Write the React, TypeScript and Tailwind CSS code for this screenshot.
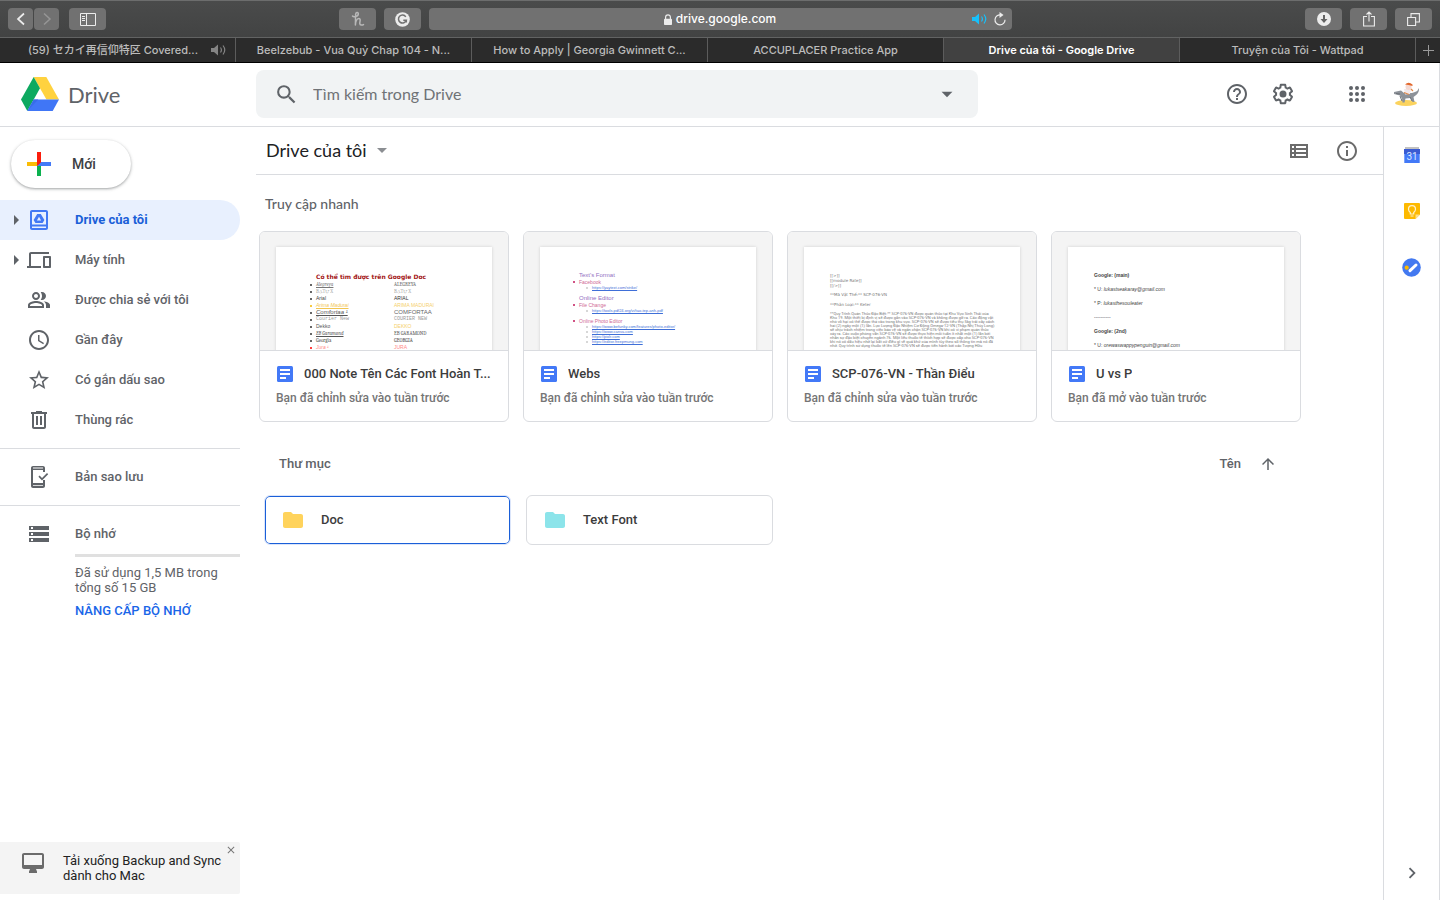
import type { ReactNode } from "react"
import {
  MdAccessTime,
  MdArrowDropDown,
  MdArrowUpward,
  MdChevronRight,
  MdClose,
  MdFolder,
  MdHelpOutline,
  MdInfoOutline,
  MdSearch,
  MdStarBorder,
  MdStorage,
} from "react-icons/md"

const TABS = [
  { title: "(59) セカイ再信仰特区 Covered...", audio: true },
  { title: "Beelzebub - Vua Quỷ Chap 104 - N..." },
  { title: "How to Apply | Georgia Gwinnett C..." },
  { title: "ACCUPLACER Practice App" },
  { title: "Drive của tôi - Google Drive", active: true },
  { title: "Truyện của Tôi - Wattpad" },
]

function Svg({ d, size = 24 }: { d: string; size?: number }) {
  return (
    <svg width={size} height={size} viewBox="0 0 24 24" fill="currentColor" fillRule="evenodd">
      <path d={d} />
    </svg>
  )
}

const DEVICES = "M4 6h18V4H4c-1.1 0-2 .9-2 2v12H0v2h14v-2H4V6zm19 2h-6c-.55 0-1 .45-1 1v10c0 .55.45 1 1 1h6c.55 0 1-.45 1-1V9c0-.55-.45-1-1-1zm-1 10h-4v-8h4v8z"
const PEOPLE = "M16.67 13.13C18.04 14.06 19 15.32 19 17v3h4v-3c0-2.18-3.57-3.47-6.33-3.87zM15 12c2.21 0 4-1.79 4-4s-1.79-4-4-4c-.47 0-.91.1-1.33.24C14.5 5.27 15 6.58 15 8s-.5 2.73-1.33 3.76c.42.14.86.24 1.33.24zM9 12c2.21 0 4-1.79 4-4s-1.79-4-4-4-4 1.79-4 4 1.79 4 4 4zm0-6c1.1 0 2 .9 2 2s-.9 2-2 2-2-.9-2-2 .9-2 2-2zM9 13c-2.67 0-8 1.34-8 4v3h16v-3c0-2.66-5.33-4-8-4zm6 5H3v-.99C3.2 16.29 6.3 15 9 15s5.8 1.29 6 2v1z"
const TRASH = "M9 3h6v1h5v2h-1v13c0 1.1-.9 2-2 2H7c-1.1 0-2-.9-2-2V6H4V4h5zM7 6v13h10V6zM9 8h2v9H9zM13 8h2v9h-2z"
const MY_DRIVE = "M5 2h14c1.1 0 2 .9 2 2v16c0 1.1-.9 2-2 2H5c-1.1 0-2-.9-2-2V4c0-1.1.9-2 2-2zM5 4v12.500h14V4zM5 18.500V20h14v-1.500zM10.200 6h3.600l3.600 6-1.800 3H8.400l-1.800-3zM12 8.800L9.900 12.400h4.200z"
const BACKUP = "M6 1h10c1.100 0 2 .9 2 2v4h-2V5H6v13h10v-3h2v6c0 1.100-.9 2-2 2H6c-1.100 0-2-.9-2-2V3c0-1.100.9-2 2-2zM6 2.600v.9h10v-.9zM6 20.200v.9h10v-.9zM20 8l1.200 1.200-6.200 6.200-3.600-3.600 1.200-1.200L15 13z"
const MONITOR = "M3 2h18c1.100 0 2 .9 2 2v12c0 1.100-.9 2-2 2h-6l1 2.500V22H8v-1.500L9 18H3c-1.100 0-2-.9-2-2V4c0-1.100.9-2 2-2zM3 4v10h18V4z"
const VIEW_LIST = "M3 5h18v14H3zM5 7v2h2V7zM9 7v2h10V7zM5 11v2h2v-2zM9 11v2h10v-2zM5 15v2h2v-2zM9 15v2h10v-2z"
const GEAR = "M13.85 22.25h-3.7c-.74 0-1.36-.54-1.45-1.27l-.27-1.89c-.27-.14-.53-.29-.79-.46l-1.8.72c-.7.26-1.47-.03-1.81-.65L2.2 15.53c-.35-.66-.2-1.44.36-1.88l1.53-1.19c-.01-.15-.02-.3-.02-.46 0-.15.01-.31.02-.46l-1.52-1.19c-.59-.45-.74-1.26-.37-1.88l1.85-3.19c.34-.62 1.11-.9 1.79-.63l1.81.73c.26-.17.52-.32.78-.46l.27-1.91c.09-.7.71-1.25 1.44-1.25h3.7c.74 0 1.36.54 1.45 1.27l.27 1.89c.27.14.53.29.79.46l1.8-.72c.71-.26 1.48.03 1.82.65l1.84 3.18c.36.66.2 1.44-.36 1.88l-1.52 1.19c.01.15.02.3.02.46s-.01.31-.02.46l1.52 1.19c.56.45.72 1.23.37 1.86l-1.86 3.22c-.34.62-1.11.9-1.8.63l-1.8-.72c-.26.17-.52.32-.78.46l-.27 1.91c-.1.68-.72 1.22-1.46 1.22zm-3.23-2h2.76l.37-2.55.53-.22c.44-.18.88-.44 1.34-.78l.45-.34 2.38.96 1.38-2.4-2.03-1.58.07-.56c.03-.26.06-.51.06-.78s-.03-.53-.06-.78l-.07-.56 2.03-1.58-1.39-2.4-2.39.96-.45-.35c-.42-.32-.87-.58-1.33-.77l-.52-.22-.37-2.55h-2.76l-.37 2.55-.53.21c-.44.19-.88.44-1.34.79l-.45.33-2.38-.95-1.39 2.39 2.03 1.58-.07.56a7 7 0 0 0-.06.79c0 .26.02.53.06.78l.07.56-2.03 1.58 1.38 2.4 2.39-.96.45.35c.43.33.86.58 1.33.77l.53.22.38 2.55zM12 8.500a3.500 3.500 0 1 0 0 7 3.500 3.500 0 0 0 0-7z"

function AppsIcon() {
  const steps = [6, 12, 18]
  return (
    <svg width="24" height="24" viewBox="0 0 24 24" fill="currentColor">
      {steps.map((y) => steps.map((x) => <circle key={`${x}-${y}`} cx={x} cy={y} r="2" />))}
    </svg>
  )
}

function SpeakerIcon() {
  return (
    <svg width="17" height="12" viewBox="0 0 17 12" fill="none" stroke="currentColor" strokeWidth="1.2">
      <path d="M1 4h3l4-3.500v11L4 8H1z" fill="currentColor" stroke="none" />
      <path d="M10.500 3.500q1.800 2.500 0 5M13 1.500q3.500 4.500 0 9" />
    </svg>
  )
}

function ChromeButton({ label, wide = true, children }: { label: string; wide?: boolean; children: ReactNode }) {
  return (
    <button
      aria-label={label}
      className={`flex h-[22px] items-center justify-center rounded bg-[#717171] text-[#ececec] ${wide ? "w-[37px]" : "w-[25px]"}`}
    >
      {children}
    </button>
  )
}

function BrowserBar() {
  return (
    <div className="flex h-[38px] items-center border-t border-b border-t-[#6c6d6d] border-b-[#626363] bg-linear-to-b from-[#4a4b4b] to-[#424343] px-2">
      <div className="flex w-[331px] gap-px">
        <ChromeButton label="Back" wide={false}>
          <svg width="10" height="14" viewBox="0 0 10 14" fill="none" stroke="currentColor" strokeWidth="1.700">
            <path d="M8 1.500L2 7l6 5.500" />
          </svg>
        </ChromeButton>
        <ChromeButton label="Forward" wide={false}>
          <svg width="10" height="14" viewBox="0 0 10 14" fill="none" stroke="#969696" strokeWidth="1.500">
            <path d="M2 1.500L8 7l-6 5.500" />
          </svg>
        </ChromeButton>
        <div className="ml-[9px]">
          <ChromeButton label="Sidebar">
            <svg width="16" height="13" viewBox="0 0 16 13" fill="none" stroke="currentColor">
              <path d="M.5.500h15v12H.5zM6.500.500v12M2 3.500h3M2 5.500h3M2 7.500h3" />
            </svg>
          </ChromeButton>
        </div>
      </div>
      <div className="flex flex-1 gap-2">
        <ChromeButton label="Honey">
          <svg width="14" height="16" viewBox="0 0 14 16" fill="none" stroke="#b8b8b8" strokeWidth="1.500" strokeLinecap="round" strokeLinejoin="round">
            <path d="M1.500 5C2.500 6.300 7.500 5.500 7.300 2.700C7 .8 4.800 1 4.600 3.500L4.400 14C4.600 10.500 6.200 7.600 8 7.600C10.200 7.600 8.600 11 8.800 12.600C9 14.300 11 14.400 12.500 13.600" />
          </svg>
        </ChromeButton>
        <ChromeButton label="Grammarly">
          <svg width="15" height="15" viewBox="0 0 15 15">
            <circle cx="7.500" cy="7.500" r="7.300" fill="#ececec" />
            <path d="M10.800 4.800A4 4 0 1 0 11.300 8.300H8.300M11.300 8.300V10.500" fill="none" stroke="#717171" strokeWidth="1.500" />
          </svg>
        </ChromeButton>
        <div className="flex h-[22px] flex-1 items-center rounded bg-[#717171] pr-1.5 text-[#ececec]">
          <div className="flex flex-1 items-center justify-center gap-1 pl-10">
            <svg width="8" height="11" viewBox="0 0 8 11" fill="currentColor">
              <path d="M0 5.500q0-.8.800-.8h6.400q.8 0 .8.800v4.700q0 .8-.8.800H.8q-.8 0-.8-.8z" />
              <path d="M1.600 5V3.200a2.400 2.400 0 0 1 4.800 0V5" fill="none" stroke="currentColor" strokeWidth="1.200" />
            </svg>
            <span className="font-['Inter','Liberation_Sans',sans-serif] text-xs font-medium text-white">drive.google.com</span>
          </div>
          <button aria-label="Mute" className="mr-1.5 text-[#17c0fb]"><SpeakerIcon /></button>
          <button aria-label="Reload">
            <svg width="12" height="14" viewBox="0 0 12 14" fill="none" stroke="currentColor" strokeWidth="1.200">
              <path d="M7 3A5 5 0 1 0 11 7.700" />
              <path d="M5.500 0L9.500 3 5.500 6z" fill="currentColor" stroke="none" />
            </svg>
          </button>
        </div>
      </div>
      <div className="flex w-[420px] justify-end gap-2">
        <ChromeButton label="Downloads">
          <svg width="14" height="14" viewBox="0 0 14 14">
            <circle cx="7" cy="7" r="7" fill="#ececec" />
            <path d="M7 3v6" stroke="#626262" strokeWidth="2" />
            <path d="M3.500 7h7L7 11z" fill="#626262" />
          </svg>
        </ChromeButton>
        <ChromeButton label="Share">
          <svg width="12" height="16" viewBox="0 0 12 16" fill="none" stroke="currentColor" strokeWidth="1.100">
            <path d="M4 5.500H.6v9.500h10.800V5.500H8M6 10.500V1M3.500 3.500L6 1l2.500 2.500" />
          </svg>
        </ChromeButton>
        <ChromeButton label="Tab overview">
          <svg width="13" height="13" viewBox="0 0 13 13" fill="none" stroke="currentColor" strokeWidth="1.100">
            <path d="M.6 4.500h8v8h-8zM4 4.500V.6h8.400V9H8.600" />
          </svg>
        </ChromeButton>
      </div>
    </div>
  )
}

function TabStrip() {
  return (
    <div className="flex h-[25px] border-b border-black bg-[#2b2b2b] font-['Inter','Liberation_Sans','Noto_Sans_CJK_JP',sans-serif] text-[11px] font-medium text-[#bcbcbc]">
      {TABS.map((tab) => (
        <button
          key={tab.title}
          className={`flex min-w-0 flex-1 items-center border-r border-[#5c5c5c] px-2 ${tab.active ? "bg-[#414141] font-semibold text-white" : ""}`}
        >
          <span className={`flex-1 truncate text-center ${tab.audio ? "pl-2" : ""}`}>{tab.title}</span>
          {tab.audio && <span className="text-[#858585]"><SpeakerIcon /></span>}
        </button>
      ))}
      <button aria-label="New tab" className="flex w-6 items-center justify-center">
        <svg width="11" height="11" viewBox="0 0 11 11" stroke="#9a9a9a"><path d="M5.500 0v11M0 5.500h11" /></svg>
      </button>
    </div>
  )
}

function DriveLogo() {
  return (
    <svg width="38" height="34" viewBox="0 0 38 34">
      <path d="M12.700 0h12.600L38 22.500H25.400z" fill="#ffd23f" />
      <path d="M12.700 0L19 11.300 6.300 34 0 22.500z" fill="#0da960" />
      <path d="M12.700 22.500H38L31.700 34H6.300z" fill="#4076f6" />
      <path d="M12.700 22.500L6.300 34l11-11.500z" fill="#386ce9" />
    </svg>
  )
}

function Avatar() {
  return (
    <svg width="28" height="26" viewBox="0 0 28 26">
      <ellipse cx="13" cy="22" rx="11" ry="3" fill="#fbd35e" />
      <path d="M1 11l7-1.500 3 2.500h8l3-1q3-1 4-4 .500 5-3.500 7.500l-2 1.500 1 5h-2l-2-4-5 .500-1 4h-2l-.500-4-2-3-6-1.500z" fill="#8d9299" />
      <path d="M3 12.500l4 .500M7 15l2 5M17 16l2 4" stroke="#6b7076" fill="none" />
      <path d="M11 8h7l-1 5-5 .500z" fill="#f1e9ec" />
      <circle cx="15.500" cy="6" r="3" fill="#f4d9d3" />
      <path d="M12 3.500Q15.500 0 19.500 3.500v1.500l-4-1z" fill="#e2682c" />
      <path d="M11 11.500l5 2M18 8l2 2" stroke="#e08a4a" strokeWidth="1.200" />
    </svg>
  )
}

function Header() {
  return (
    <header className="flex h-16 items-center border-b border-[#dadce0] pb-px text-[#5f6368]">
      <a href="#" className="flex w-64 items-center gap-[9px] pl-[21px] font-['Lato','Open_Sans',sans-serif] text-[22px]">
        <DriveLogo />
        Drive
      </a>
      <form className="flex h-12 max-w-[722px] flex-1 items-center rounded-lg bg-[#f1f3f4] px-[18px]">
        <button type="button" aria-label="Tìm kiếm"><MdSearch size={25} /></button>
        <input
          aria-label="Tìm kiếm trong Drive"
          placeholder="Tìm kiếm trong Drive"
          className="ml-3.5 flex-1 bg-transparent font-['Lato','Open_Sans',sans-serif] text-base outline-none placeholder:text-[#6f7276]"
        />
        <button type="button" aria-label="Tùy chọn tìm kiếm"><MdArrowDropDown size={26} /></button>
      </form>
      <div className="ml-auto flex items-center pr-[18px]">
        <button aria-label="Trợ giúp"><MdHelpOutline size={24} /></button>
        <button aria-label="Cài đặt" className="ml-[22px]"><Svg d={GEAR} /></button>
        <button aria-label="Ứng dụng" className="ml-[50px]"><AppsIcon /></button>
        <button aria-label="Tài khoản" className="ml-6"><Avatar /></button>
      </div>
    </header>
  )
}

function NavItem({ icon, label, active, expandable }: { icon: ReactNode; label: string; active?: boolean; expandable?: boolean }) {
  return (
    <a
      href="#"
      className={`flex h-10 items-center rounded-r-full ${active ? "bg-[#e8f0fe] font-bold text-[#1a5fd8]" : ""}`}
    >
      <span className="flex w-[27px] justify-center pl-1.5 text-[#5f6368]">
        {expandable && <svg width="5" height="10" viewBox="0 0 5 10" fill="currentColor"><path d="M0 0l5 5-5 5z" /></svg>}
      </span>
      <span className={active ? "text-[#4379f4]" : ""}>{icon}</span>
      <span className="ml-6">{label}</span>
    </a>
  )
}

function Sidebar() {
  return (
    <aside className="flex w-64 flex-col pr-4 pb-1.5 text-[13px] font-medium text-[#5f6368]">
      <button className="mt-[13px] ml-[11px] flex h-12 w-[120px] items-center self-start rounded-full pl-4 text-sm text-[#3c4043] shadow-[0_1px_2px_0_rgba(60,64,67,0.3),0_1px_3px_1px_rgba(60,64,67,0.15)]">
        <svg width="24" height="24" viewBox="0 0 24 24">
          <path d="M10 0h4v12l-4 2z" fill="#fb1d0c" />
          <path d="M14 10h10v4H10z" fill="#4379f7" />
          <path d="M10 14h4v10h-4z" fill="#0bb14f" />
          <path d="M0 10h10v4H0z" fill="#fbbc05" />
          <path d="M10 10h4l-4 4z" fill="#fb1d0c" />
        </svg>
        <span className="ml-[21px]">Mới</span>
      </button>
      <nav className="mt-3">
        <NavItem icon={<Svg d={MY_DRIVE} />} label="Drive của tôi" active expandable />
        <NavItem icon={<Svg d={DEVICES} />} label="Máy tính" expandable />
        <NavItem icon={<Svg d={PEOPLE} />} label="Được chia sẻ với tôi" />
        <NavItem icon={<MdAccessTime size={24} />} label="Gần đây" />
        <NavItem icon={<MdStarBorder size={24} />} label="Có gắn dấu sao" />
        <NavItem icon={<Svg d={TRASH} />} label="Thùng rác" />
        <hr className="my-2 border-[#dadce0]" />
        <NavItem icon={<Svg d={BACKUP} />} label="Bản sao lưu" />
        <hr className="my-2 border-[#dadce0]" />
        <NavItem icon={<MdStorage size={24} />} label="Bộ nhớ" />
      </nav>
      <div className="ml-[75px] border-t-3 border-[#e0e0e0] pt-2 leading-[15px] font-normal">
        Đã sử dụng 1,5 MB trong tổng số 15 GB
        <a href="#" className="mt-2 block font-medium text-[#1a66e8]">NÂNG CẤP BỘ NHỚ</a>
      </div>
      <div className="mt-auto flex h-[52px] rounded-r-xs bg-[#f4f4f4] text-[#222] font-normal">
        <span className="mt-[9px] ml-[21px] text-[#6b6b6b]"><Svg d={MONITOR} /></span>
        <p className="mt-[11px] ml-[18px] flex-1 leading-[15px]">Tải xuống Backup and Sync dành cho Mac</p>
        <button aria-label="Đóng" className="mt-0.5 mr-[3px] self-start text-[#777]"><MdClose size={12} /></button>
      </div>
    </aside>
  )
}

const FONT_ROWS = [
  { name: "Alegreya", upper: "ALEGREYA", style: "font-serif italic underline text-[#777]", upperStyle: "font-serif text-[#666]", dot: "bg-[#333]" },
  { name: "BẠTỰ X", upper: "BẠTỰ X", style: "font-serif text-[#aaa]", upperStyle: "font-serif text-[#aaa]", dot: "bg-[#333]" },
  { name: "Arial", upper: "ARIAL", style: "text-[#444]", upperStyle: "text-[#333]", dot: "bg-[#333]" },
  { name: "Arima Madurai", upper: "ARIMA MADURAI", style: "italic underline text-[#f2c550]", upperStyle: "text-[#f5cf6c]", dot: "bg-[#f5b800]" },
  { name: "Comfortaa ¹", upper: "COMFORTAA", style: "italic underline text-[6px] text-[#555]", upperStyle: "text-[6px] text-[#666]", dot: "bg-[#333]" },
  { name: "Courier New", upper: "COURIER NEW", style: "font-mono text-[#999]", upperStyle: "font-mono text-[#999]", dot: "bg-[#333]" },
  { name: "Dekko", upper: "DEKKO", style: "text-[#555]", upperStyle: "text-[#f5cf6c]", dot: "bg-[#333]" },
  { name: "EB Garamond", upper: "EB GARAMOND", style: "font-serif italic underline text-[#555]", upperStyle: "font-serif text-[#555]", dot: "bg-[#333]" },
  { name: "Georgia", upper: "GEORGIA", style: "font-serif text-[#444]", upperStyle: "font-serif text-[#444]", dot: "bg-[#333]" },
  { name: "Jura ¹", upper: "JURA", style: "italic underline text-[#f88]", upperStyle: "text-[#f88]", dot: "bg-[#f00]" },
]

function FontsPage() {
  return (
    <div className="pt-[26px] pl-[34px] font-['Liberation_Sans',sans-serif] text-[5px] leading-[7px] whitespace-nowrap">
      <p className="pl-1.5 font-['DejaVu_Sans',sans-serif] text-[6px] font-bold text-[#a31515]">Có thể tìm được trên Google Doc</p>
      <ul className="pt-px">
        {FONT_ROWS.map((row) => (
          <li key={row.name} className="flex h-[7px] items-center">
            <span className={`mr-1 size-[2px] rounded-full ${row.dot}`} />
            <span className={`w-[78px] ${row.style}`}>{row.name}</span>
            <span className={row.upperStyle}>{row.upper}</span>
          </li>
        ))}
      </ul>
    </div>
  )
}

const LINK_SECTIONS = [
  { heading: "Text's Format", title: "Facebook", links: ["https://yaytext.com/strike/"] },
  { heading: "Online Editor", title: "File Change", links: ["https://tools.pdf24.org/vi/tao-tep-anh-pdf"] },
  {
    title: "Online Photo Editor",
    links: ["https://www.befunky.com/features/photo-editor/", "https://www.canva.com", "https://pixlr.com", "https://editor.freepmung.com"],
  },
]

function WebsPage() {
  return (
    <div className="pt-[25px] pl-[33px] font-['Liberation_Sans',sans-serif] text-[5px] leading-[6px] whitespace-nowrap">
      {LINK_SECTIONS.map((section) => (
        <section key={section.title} className="mb-[5px]">
          {section.heading && <h3 className="pl-1.5 text-[6px] leading-[7px] text-[#9270c2]">{section.heading}</h3>}
          <p className="flex items-center text-[#cf6a96]">
            <span className="mr-1 size-[2px] rounded-full bg-[#c2185b]" />
            {section.title}
          </p>
          {section.links.map((link) => (
            <p key={link} className="flex h-[5px] items-center pl-[13px] text-[4px] text-[#3f6fd8]">
              <span className="mr-1 size-[2px] rounded-full border border-[#bbb]" />
              <span className="underline">{link}</span>
            </p>
          ))}
        </section>
      ))}
    </div>
  )
}

const SCP_LINES = [
  "**Quy Trình Quản Thúc Đặc Biệt:** SCP-076-VN được quản thúc tại Khu Vực Sinh Thái của",
  "Khu 19. Một thiết bị định vị sẽ được gắn vào SCP-076-VN và không được gỡ ra. Các động vật",
  "nhỏ vô hại có thể được thả vào trong khu vực. SCP-076-VN sẽ được tiêu thụ 5kg trái cây cách",
  "hai (2) ngày một (1) lần. Lực Lượng Đặc Nhiệm Cơ Động Omega-12-VN (Thập Nhị Thủy Long)",
  "sẽ chịu trách nhiệm trong việc bảo vệ và ngăn chặn SCP-076-VN khi có vi phạm quản thúc",
  "xảy ra. Các cuộc phỏng vấn SCP-076-VN sẽ được thực hiện mỗi tuần ít nhất một (1) lần bởi",
  "nhân sự đặc biệt chuyên ngành 76. Một liều thuốc tê thích hợp sẽ được cấp cho SCP-076-VN",
  "khi nó có dấu hiệu nhớ lại bất cứ điều gì về quá khứ của mình tùy theo số thông tin mà nó đã",
  "nhớ. Quy trình sử dụng thuốc tê lên SCP-076-VN sẽ được tiến hành bởi các Tượng Hữu",
]

function ScpPage() {
  return (
    <div className="pt-[26px] pl-[26px] font-['DejaVu_Sans',sans-serif] text-[4px] leading-[5px] whitespace-nowrap text-[#777]">
      <p>[[&gt;]]</p>
      <p>[[module Rate]]</p>
      <p>[[/&gt;]]</p>
      <p className="mt-1">**Mã Vật Thể:** SCP-076-VN</p>
      <p className="my-[5px]">**Phân Loại:** Keter</p>
      <div className="font-['Roboto',sans-serif] leading-[4px]">
        {SCP_LINES.map((line) => <p key={line}>{line}</p>)}
      </div>
    </div>
  )
}

function AccountsPage() {
  return (
    <div className="space-y-[7px] pt-[25px] pl-[26px] font-['Liberation_Sans',sans-serif] text-[5px] leading-[7px] whitespace-nowrap text-[#444]">
      <p className="font-bold">Google: (main)</p>
      <p>* U: <i>lukastseakaray@gmail.com</i></p>
      <p>* P: <i>lukasthesouleater</i></p>
      <p>----------</p>
      <p className="font-bold">Google: (2nd)</p>
      <p>* U: <i>orewaswappypenguin@gmail.com</i></p>
    </div>
  )
}

function FileCard({ title, note, children }: { title: string; note: string; children: ReactNode }) {
  return (
    <a href="#" className="block overflow-hidden rounded-md border border-[#dadce0]">
      <div className="h-[119px] overflow-hidden border-b border-[#dadce0] bg-[#f4f4f4] px-4 pt-[15px]">
        <div className="h-40 overflow-hidden bg-white shadow-[0_0_3px_rgba(0,0,0,0.15)]">{children}</div>
      </div>
      <div className="flex h-[70px] flex-col px-4 pt-3.5">
        <div className="flex items-center gap-[11px]">
          <svg width="16" height="16" viewBox="0 0 16 16" className="ml-px shrink-0">
            <rect width="16" height="16" rx="1.500" fill="#4379f7" />
            <path d="M3 4h10M3 8h10M3 12h6" stroke="#fff" strokeWidth="2" />
          </svg>
          <span className="truncate text-[13px] leading-[17px] font-medium text-[#3c3c3c]">{title}</span>
        </div>
        <p className="mt-2 text-xs leading-4 font-medium text-[#757575]">{note}</p>
      </div>
    </a>
  )
}

function Main() {
  return (
    <main className="flex-1">
      <div className="flex h-12 items-center border-b border-[#dadce0] pr-6 pl-2.5 text-[#6b6b6b]">
        <button className="flex items-center gap-[3px] pb-0.5 font-['Lato','Open_Sans',sans-serif] text-lg text-[#202124]">
          Drive của tôi
          <MdArrowDropDown size={24} className="text-[#8b8e92]" />
        </button>
        <button aria-label="Chế độ xem danh sách" className="ml-auto"><Svg d={VIEW_LIST} /></button>
        <button aria-label="Chi tiết" className="ml-6"><MdInfoOutline size={24} /></button>
      </div>
      <h2 className="mt-[19px] ml-[9px] font-['Lato','Open_Sans',sans-serif] text-sm leading-5 font-medium text-[#5f6368]">Truy cập nhanh</h2>
      <div className="mt-[17px] mr-[82px] ml-[3px] grid grid-cols-4 gap-3.5">
        <FileCard title="000 Note Tên Các Font Hoàn T..." note="Bạn đã chỉnh sửa vào tuần trước"><FontsPage /></FileCard>
        <FileCard title="Webs" note="Bạn đã chỉnh sửa vào tuần trước"><WebsPage /></FileCard>
        <FileCard title="SCP-076-VN - Thần Điểu" note="Bạn đã chỉnh sửa vào tuần trước"><ScpPage /></FileCard>
        <FileCard title="U vs P" note="Bạn đã mở vào tuần trước"><AccountsPage /></FileCard>
      </div>
      <div className="mt-8 mr-[106px] ml-[23px] flex h-5 items-center justify-between text-[13px] font-medium text-[#5f6368]">
        <h2>Thư mục</h2>
        <button className="flex items-center gap-[18px]">
          Tên
          <MdArrowUpward size={18} />
        </button>
      </div>
      <div className="mt-[21px] mr-[86px] ml-2 grid grid-cols-4 gap-[15px] text-[13px] font-medium text-[#3c3c3c]">
        <button className="flex h-[50px] items-center gap-4 rounded-md border border-[#dbe5fa] pl-4 ring-1 ring-[#1a5fd8] ring-inset">
          <MdFolder size={24} className="text-[#ffd35c]" />
          Doc
        </button>
        <button className="flex h-[50px] items-center gap-4 rounded-md border border-[#dadce0] pl-4">
          <MdFolder size={24} className="text-[#8ce4ea]" />
          Text Font
        </button>
      </div>
    </main>
  )
}

function SidePanel() {
  return (
    <aside className="flex w-14 flex-col items-center border-l border-[#dadce0] pt-4 pb-4">
      <button aria-label="Lịch" className="flex h-6 items-center">
        <svg width="16" height="16" viewBox="0 0 16 16">
          <path d="M1 0h14v3H1z" fill="#c2c2c2" />
          <path d="M0 2h16v5H0z" fill="#3a5bd2" />
          <path d="M.3 7h15.400v9H.3z" fill="#4379f7" />
          <text x="8" y="13" textAnchor="middle" fill="#dce7ff" fontSize="10" fontFamily="Roboto">31</text>
        </svg>
      </button>
      <button aria-label="Keep" className="mt-8 flex h-6 items-center">
        <svg width="16" height="16" viewBox="0 0 16 16">
          <path d="M1 0h14q1 0 1 1v10.500L11.500 16H1q-1 0-1-1V1q0-1 1-1z" fill="#fdb900" />
          <path d="M11.500 16v-4.500H16z" fill="#ffe08a" />
          <path d="M6.300 9.500Q4.500 8 4.500 6.200a3.500 3.500 0 0 1 7 0Q11.500 8 9.700 9.500V11H6.300zM6.500 13h3" fill="none" stroke="#fff2cc" strokeWidth="1.200" />
        </svg>
      </button>
      <button aria-label="Tasks" className="mt-8 flex h-6 items-center">
        <svg width="19" height="19" viewBox="0 0 19 19">
          <circle cx="9.500" cy="9.500" r="9.300" fill="#4379f0" />
          <path d="M8 12.700L14 7" stroke="#fff" strokeWidth="3" strokeLinecap="round" />
          <circle cx="4.700" cy="9.700" r="2.100" fill="#fbb800" />
        </svg>
      </button>
      <button aria-label="Ẩn bảng điều khiển" className="mt-auto text-[#5f6368]"><MdChevronRight size={22} /></button>
    </aside>
  )
}

export default function App() {
  return (
    <div className="flex min-h-screen flex-col bg-white font-['Roboto','Liberation_Sans',sans-serif]">
      <BrowserBar />
      <TabStrip />
      <div className="flex flex-1 flex-col border-r border-[#dadce0]">
        <Header />
        <div className="flex flex-1">
          <Sidebar />
          <Main />
          <SidePanel />
        </div>
      </div>
    </div>
  )
}
